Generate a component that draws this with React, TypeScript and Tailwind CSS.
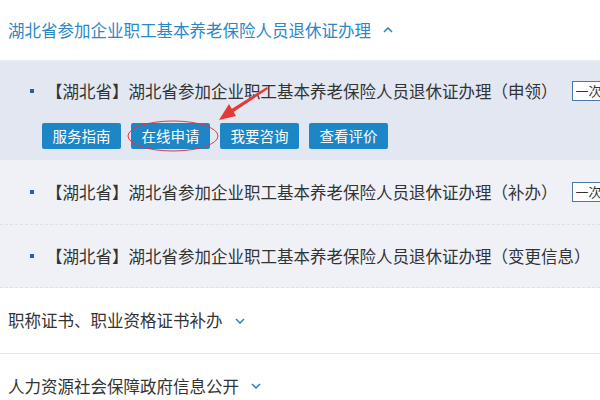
const FONT = '"Microsoft YaHei", "Noto Sans CJK SC", "Noto Sans", sans-serif';

function Chevron({ up }: { up?: boolean }) {
  return (
    <svg width="10" height="6" viewBox="0 0 10 6" className="ml-3 shrink-0">
      <path
        d={up ? 'M1 5 L5 1 L9 5' : 'M1 1 L5 5 L9 1'}
        fill="none"
        stroke="#2a87c8"
        strokeWidth="1.6"
      />
    </svg>
  );
}

function Bullet() {
  return <span className="w-[4px] h-[4px] bg-[#2c5d9c] shrink-0 mr-[12px]" />;
}

function Badge() {
  return (
    <span className="ml-[14px] shrink-0 border border-[#4a78a8] bg-white text-[#333] text-[13px] leading-[18px] px-[3px]">
      一次办结
    </span>
  );
}

const buttons = ['服务指南', '在线申请', '我要咨询', '查看评价'];

export default function App() {
  return (
    <div
      className="relative w-[600px] h-[400px] overflow-hidden bg-white text-[#333]"
      style={{ fontFamily: FONT }}
    >
      {/* section 1 header */}
      <div className="h-[61px] flex items-center pl-[8px] text-[16.5px] text-[#2a87c8] border-b border-[#e9ebf3]">
        湖北省参加企业职工基本养老保险人员退休证办理
        <Chevron up />
      </div>

      {/* item 1 (hovered) */}
      <div className="bg-[#e2e7f2] pt-[18px] pb-[11px] pl-[30px]">
        <div className="flex items-center h-[24px] text-[16.5px] whitespace-nowrap">
          <Bullet />
          【湖北省】湖北省参加企业职工基本养老保险人员退休证办理（申领）
          <Badge />
        </div>
        <div className="flex gap-[10px] mt-[20px] pl-[12px]">
          {buttons.map((b) => (
            <span
              key={b}
              className="w-[79px] h-[26px] flex items-center justify-center rounded-[2px] bg-[#1c86c6] text-white text-[14.5px]"
            >
              {b}
            </span>
          ))}
        </div>
      </div>

      {/* item 2 */}
      <div className="bg-[#eff1f7] h-[65px] pl-[30px] flex items-center border-b border-dashed border-[#dde0ea]">
        <div className="flex items-center text-[16.5px] whitespace-nowrap">
          <Bullet />
          【湖北省】湖北省参加企业职工基本养老保险人员退休证办理（补办）
          <Badge />
        </div>
      </div>

      {/* item 3 */}
      <div className="bg-[#eff1f7] h-[63px] pl-[30px] flex items-center border-b border-dashed border-[#dde0ea]">
        <div className="flex items-center text-[16.5px] whitespace-nowrap">
          <Bullet />
          【湖北省】湖北省参加企业职工基本养老保险人员退休证办理（变更信息）
        </div>
      </div>

      {/* section 2 */}
      <div className="h-[66px] flex items-center pl-[8px] text-[16.5px] border-b border-[#e6e6e6]">
        职称证书、职业资格证书补办
        <Chevron />
      </div>

      {/* section 3 */}
      <div className="h-[64px] flex items-center pl-[8px] text-[16.5px]">
        人力资源社会保障政府信息公开
        <Chevron />
      </div>

      {/* annotation: red ellipse and arrow */}
      <svg className="absolute inset-0 pointer-events-none" width="600" height="400">
        <ellipse cx="173" cy="136" rx="45" ry="15" fill="none" stroke="#e0383e" strokeWidth="1" />
        <polygon points="267,87 268,89 232,113 230,110" fill="#e53935" />
        <polygon points="219,120 229,104 236,116" fill="#e53935" />
      </svg>
    </div>
  );
}
